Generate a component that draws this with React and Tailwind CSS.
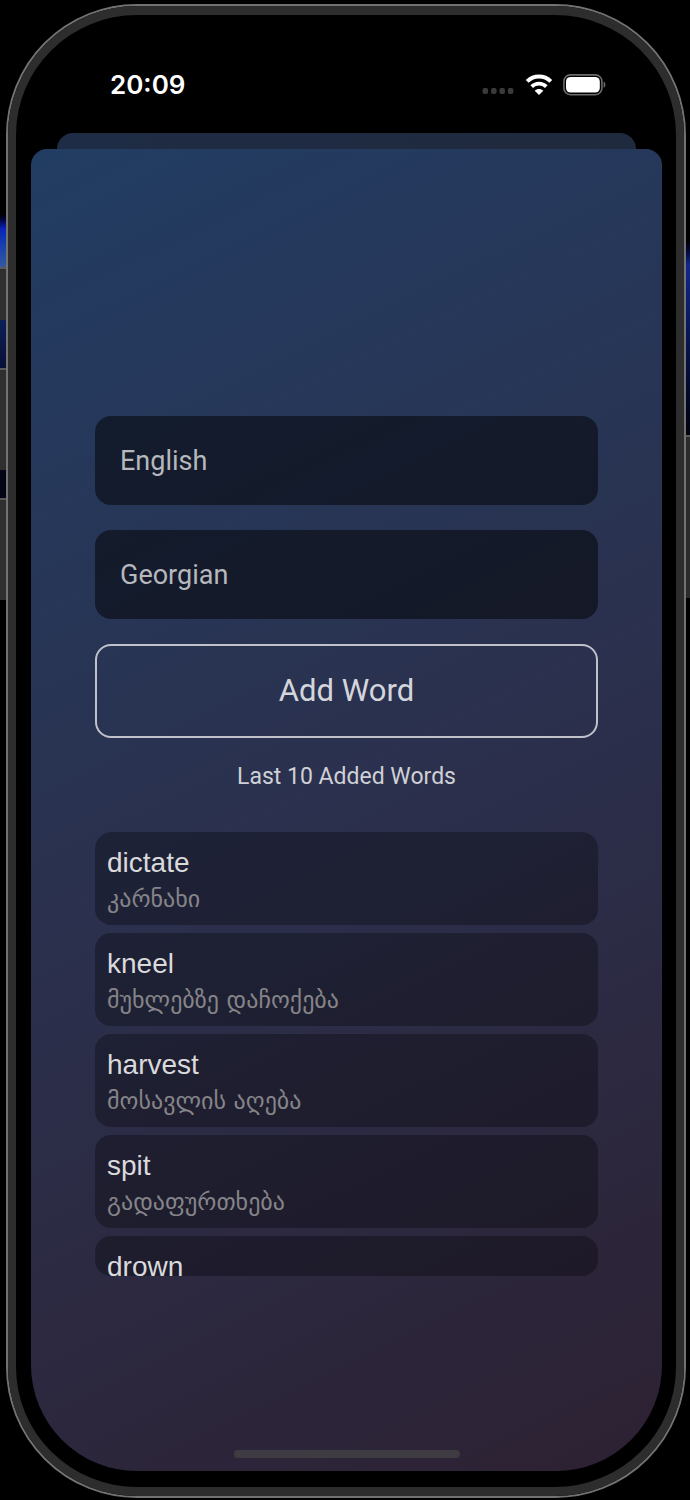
import React, { useState, useCallback } from 'react';

const initialWords = [
  { id: 1, english: 'dictate', georgian: 'კარნახი' },
  { id: 2, english: 'kneel', georgian: 'მუხლებზე დაჩოქება' },
  { id: 3, english: 'harvest', georgian: 'მოსავლის აღება' },
  { id: 4, english: 'spit', georgian: 'გადაფურთხება' },
  { id: 5, english: 'drown' }
];

function SignalDots() {
  return (
    <svg width="32" height="6" viewBox="0 0 32 6" fill="#3a3a3a" aria-hidden="true">
      <rect x="0.5" y="0" width="5.6" height="6" rx="2" />
      <rect x="9" y="0" width="5.6" height="6" rx="2" />
      <rect x="17.4" y="0" width="5.6" height="6" rx="2" />
      <rect x="25.8" y="0" width="5.6" height="6" rx="2" />
    </svg>
  );
}

function WifiIcon() {
  return (
    <svg width="28" height="22" viewBox="0 0 28 22" fill="none" aria-hidden="true">
      <path d="M2.2 7.4C8.8 0.9 19.2 0.9 25.8 7.4" stroke="#fff" strokeWidth="4" />
      <path d="M6.7 12.6C10.9 8.6 17.1 8.6 21.3 12.6" stroke="#fff" strokeWidth="3.8" />
      <path d="M14 21L9.7 16.8C12.3 14.3 15.7 14.3 18.3 16.8Z" fill="#fff" />
    </svg>
  );
}

function BatteryIcon() {
  return (
    <svg width="43" height="22" viewBox="0 0 43 22" fill="none" aria-hidden="true">
      <rect x="0.9" y="0.9" width="38" height="19.8" rx="6.5" stroke="#6b6b6b" strokeWidth="1.6" />
      <rect x="3" y="3" width="33.8" height="15.6" rx="4.6" fill="#fff" />
      <path d="M40.6 7.6C43 8.8 43 12.8 40.6 14Z" fill="#6b6b6b" />
    </svg>
  );
}

function StatusBar() {
  return (
    <div className="flex h-[118px] items-center justify-between pt-[22px] pr-14 pl-[79px]">
      <span className="font-['Inter',sans-serif] text-[26px] leading-8 font-semibold text-white">20:09</span>
      <div className="flex items-center">
        <span className="mr-[11px] pt-3">
          <SignalDots />
        </span>
        <span className="mr-[10px]">
          <WifiIcon />
        </span>
        <BatteryIcon />
      </div>
    </div>
  );
}

function WordField({ label, value, onChange }) {
  return (
    <input
      type="text"
      aria-label={label}
      placeholder={label}
      value={value}
      onChange={(e) => onChange(e.target.value)}
      className="h-[89px] w-full rounded-2xl bg-black/50 px-[25px] text-[27px] text-zinc-200 placeholder-[#b6b8bd] focus:outline-none"
    />
  );
}

function WordCard({ word }) {
  return (
    <li className="h-[93px] shrink-0 rounded-2xl bg-black/30 px-3 pt-[13px]">
      <p className="font-['Liberation_Sans',sans-serif] text-[28px] leading-[35px] text-[#dadadc]">{word.english}</p>
      {word.georgian && (
        <p className="font-['DejaVu_Sans',sans-serif] text-[24px] leading-[38px] text-[#858488]">{word.georgian}</p>
      )}
    </li>
  );
}

export default function App() {
  const [words, setWords] = useState(initialWords);
  const [english, setEnglish] = useState('');
  const [georgian, setGeorgian] = useState('');

  const handleSubmit = useCallback((e) => {
    e.preventDefault();
    if (!english.trim() || !georgian.trim()) return;
    setWords(prev => [{ id: Date.now(), english, georgian }, ...prev].slice(0, 10));
    setEnglish('');
    setGeorgian('');
  }, [english, georgian]);

  return (
    <div className="flex min-h-screen bg-black font-['Roboto',sans-serif]">
      {/* Left side buttons with the wallpaper behind them */}
      <div className="flex w-[6px] shrink-0 flex-col pt-[212px]">
        <div className="h-[55px] bg-linear-to-b from-black via-[#0a22b8] via-30% to-[#3458a0]" />
        <div className="h-[53px] border-t-2 border-[#5a5a5a] bg-[#2f2f2f]" />
        <div className="h-[48px] bg-linear-to-b from-[#0d1f58] to-[#071136]" />
        <div className="h-[102px] border-t-2 border-[#5a5a5a] bg-[#2f2f2f]" />
        <div className="h-[28px] bg-[#020615]" />
        <div className="h-[102px] border-t-2 border-[#5a5a5a] bg-[#2f2f2f]" />
      </div>

      {/* Phone body */}
      <div className="mt-1 mb-[2px] flex-1 rounded-[131px] border-2 border-[#727272]">
        <div className="rounded-[129px] border-x-8 border-y-9 border-[#2d2d2d] bg-black pr-[14px] pb-4 pl-[15px]">
          <StatusBar />
          <div className="mx-[26px] h-4 rounded-t-2xl bg-linear-to-r from-[#1e2c45] to-[#202a3e]" />

          {/* Sheet */}
          <main className="flex flex-col rounded-t-2xl rounded-b-[106px] bg-linear-[154deg] from-[#223d63] via-[#2b304d] to-[#2d2132] px-16 pt-[267px] pb-[13px]">
            <form onSubmit={handleSubmit} className="flex flex-col gap-[25px]">
              <WordField label="English" value={english} onChange={setEnglish} />
              <WordField label="Georgian" value={georgian} onChange={setGeorgian} />
              <button
                type="submit"
                className="h-[94px] cursor-pointer rounded-2xl border-2 border-[#c0c1c9] text-[31px] text-[#d5d6db]"
              >
                Add Word
              </button>
            </form>

            <h2 className="mt-[25px] text-center text-[23px] leading-7 text-[#cfd0d6]">Last 10 Added Words</h2>

            <ul className="mt-[41px] flex h-[444px] flex-col gap-2 overflow-y-auto rounded-2xl [scrollbar-width:none]">
              {words.map((word) => (
                <WordCard key={word.id} word={word} />
              ))}
            </ul>

            {/* Home indicator */}
            <div className="mt-[174px] h-2 w-[226px] self-center rounded-full bg-[#3e3c42]" />
          </main>
        </div>
      </div>

      {/* Right side button */}
      <div className="flex w-1 shrink-0 flex-col pt-[235px]">
        <div className="h-[200px] bg-linear-to-b from-black via-[#12278a] via-15% to-[#01030f]" />
        <div className="h-[163px] border-t-2 border-[#5a5a5a] bg-[#2b2b2b]" />
      </div>
    </div>
  );
}
